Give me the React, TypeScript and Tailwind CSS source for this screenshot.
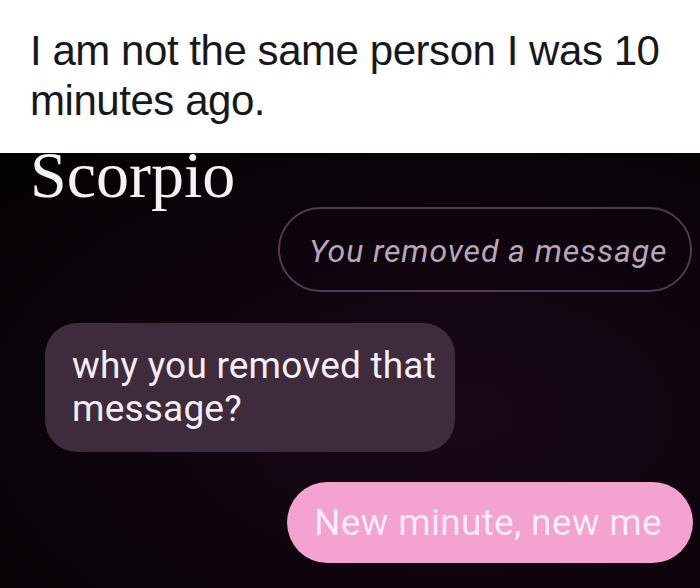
import React from "react";

export default function App() {
  return (
    <div className="w-[700px] h-[588px] flex flex-col bg-white overflow-hidden">
      <div className="h-[153px] pl-[30px] pt-[26px] font-['Liberation_Sans',Arial,sans-serif] text-[42px] leading-[50px] tracking-[-0.45px] text-[#15181c]">
        <p>I am not the same person I was 10</p>
        <p>minutes ago.</p>
      </div>
      <div className="flex-1 flex flex-col bg-[#0b030a] bg-[radial-gradient(ellipse_at_65%_60%,#1a0818_0%,#0e040d_50%,#030103_100%)]">
        <div className="pl-[30px] h-[44px] font-['Liberation_Serif','Times_New_Roman',serif] text-[66px] leading-[44px] text-[#f4f2f2]">
          Scorpio
        </div>
        <div className="mt-[10px] self-end mr-[8px] w-[414px] h-[85px] rounded-full border-2 border-[#533a50] flex items-center pl-[29px] pt-[3px]">
          <span className="italic font-['Roboto','Noto_Sans',sans-serif] text-[32px] tracking-[0.9px] text-[#b9a5b8]">
            You removed a message
          </span>
        </div>
        <div className="mt-[31px] ml-[45px] w-[410px] rounded-[32px] bg-[#3e2c3d] pl-[27px] pt-[21px] pb-[22px] font-['Roboto','Noto_Sans',sans-serif] text-[37px] leading-[43px] tracking-[0.2px] text-[#f5eef4]">
          why you removed that
          <br />
          message?
        </div>
        <div className="mt-[30px] self-end mr-[7px] w-[406px] h-[81px] rounded-full bg-[#f4a2d0] flex items-center pl-[27px]">
          <span className="font-['Roboto','Noto_Sans',sans-serif] text-[37px] tracking-[0.3px] text-[#feecf7] blur-[0.5px]">
            New minute, new me
          </span>
        </div>
      </div>
    </div>
  );
}
